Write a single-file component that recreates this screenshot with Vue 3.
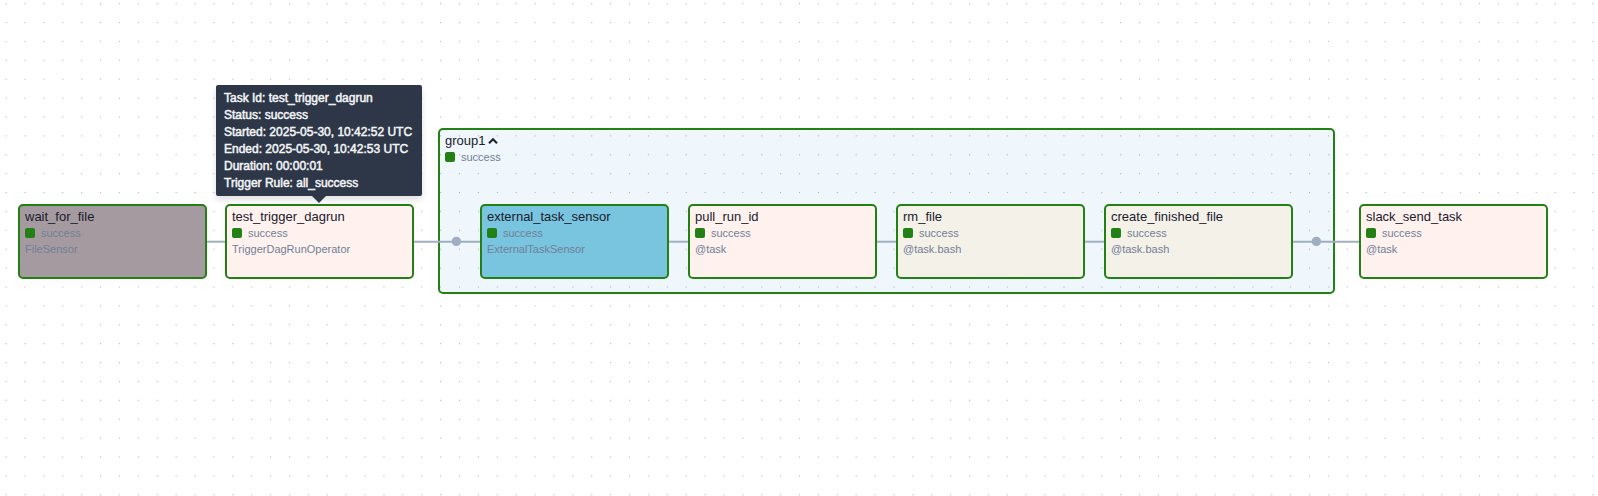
<script setup>
import { ref } from 'vue'

const groupOpen = ref(true)

const group = { label: 'group1', state: 'success', x: 438, y: 128, w: 897, h: 166 }

const tasks = [
  { id: 'wait_for_file', state: 'success', operator: 'FileSensor', x: 18, tone: 'file' },
  { id: 'test_trigger_dagrun', state: 'success', operator: 'TriggerDagRunOperator', x: 225, tone: 'python' },
  { id: 'external_task_sensor', state: 'success', operator: 'ExternalTaskSensor', x: 480, tone: 'external' },
  { id: 'pull_run_id', state: 'success', operator: '@task', x: 688, tone: 'python' },
  { id: 'rm_file', state: 'success', operator: '@task.bash', x: 896, tone: 'bash' },
  { id: 'create_finished_file', state: 'success', operator: '@task.bash', x: 1104, tone: 'bash' },
  { id: 'slack_send_task', state: 'success', operator: '@task', x: 1359, tone: 'python' },
]

const edges = [
  [206, 226],
  [413, 481],
  [668, 689],
  [876, 897],
  [1084, 1105],
  [1292, 1360],
]

const joins = [456, 1316]

const details = [
  ['Task Id', 'test_trigger_dagrun'],
  ['Status', 'success'],
  ['Started', '2025-05-30, 10:42:52 UTC'],
  ['Ended', '2025-05-30, 10:42:53 UTC'],
  ['Duration', '00:00:01'],
  ['Trigger Rule', 'all_success'],
]

const at = (x, y) => ({ left: `${x}px`, top: `${y}px` })
</script>

<template>
  <main class="canvas">
    <svg class="layer" aria-hidden="true">
      <defs>
        <pattern id="dots" x="5.6" y="3.1" width="18.89" height="18.89" patternUnits="userSpaceOnUse">
          <circle cx="0.6" cy="0.6" r="0.6" fill="#a8a8ae" />
        </pattern>
      </defs>
      <rect width="100%" height="100%" fill="url(#dots)" />
    </svg>

    <section
      class="group"
      :style="{ ...at(group.x, group.y), width: `${group.w}px`, height: `${group.h}px` }"
    >
      <button class="toggle" type="button" :aria-expanded="groupOpen" @click="groupOpen = !groupOpen">
        {{ group.label }}
        <svg class="chevron" viewBox="0 0 10 8" aria-hidden="true">
          <path d="M1 6.2 5 2.2 9 6.2" />
        </svg>
      </button>
      <p class="state"><span class="swatch"></span>{{ group.state }}</p>
    </section>

    <svg class="layer" aria-hidden="true">
      <line v-for="[from, to] in edges" :key="from" class="edge" :x1="from" :x2="to" y1="241.7" y2="241.7" />
      <circle v-for="x in joins" :key="x" class="join" :cx="x + 0.4" cy="241.4" r="4.7" />
    </svg>

    <article v-for="task in tasks" :key="task.id" class="task" :class="task.tone" :style="at(task.x, 204)">
      <h2 class="name">{{ task.id }}</h2>
      <p class="state"><span class="swatch"></span>{{ task.state }}</p>
      <p class="operator">{{ task.operator }}</p>
    </article>

    <div class="tooltip" role="tooltip" :style="at(216, 85)">
      <p v-for="[label, value] in details" :key="label">{{ label }}: {{ value }}</p>
    </div>
  </main>
</template>

<style>
body {
  margin: 0;
  background: #fff;
}
</style>

<style scoped>
.canvas {
  position: relative;
  min-height: 100vh;
  overflow: hidden;
  font-family: "Liberation Sans", Arial, sans-serif;
  color: #1a202c;
}

.layer {
  position: absolute;
  inset: 0;
  width: 100%;
  height: 100%;
}

.edge {
  stroke: #a0aec0;
  stroke-width: 2;
}

.join {
  fill: #a0aec0;
}

.group,
.task {
  position: absolute;
  box-sizing: border-box;
  padding: 3px 5px 0;
  border: 2px solid #228015;
  border-radius: 5px;
}

.group {
  background: rgba(49, 140, 220, 0.08);
}

.task {
  width: 189px;
  height: 75px;
}

.file { background: #a59aa0; }
.python { background: #fff2ee; }
.external { background: #79c4df; }
.bash { background: #f4f1e9; }

.name,
.toggle {
  margin: 0;
  font-size: 13px;
  font-weight: 400;
  line-height: 16px;
}

.toggle {
  display: flex;
  align-items: center;
  gap: 3px;
  padding: 0;
  border: 0;
  background: none;
  color: inherit;
  font-family: inherit;
  cursor: pointer;
}

.chevron {
  width: 10px;
  height: 8px;
  fill: none;
  stroke: #1a202c;
  stroke-width: 2;
}

.state,
.operator {
  margin: 0;
  color: #718096;
  font-size: 11px;
  line-height: 16px;
}

.state {
  display: flex;
  align-items: center;
  gap: 6px;
}

.swatch {
  width: 10px;
  height: 10px;
  border-radius: 2px;
  background: #228015;
}

.tooltip {
  position: absolute;
  padding: 5px 10px 4px 8px;
  border-radius: 2px;
  background: #2d3748;
  color: #f3f4f6;
  font-size: 12px;
  line-height: 17px;
  white-space: nowrap;
  -webkit-text-stroke: 0.5px #f3f4f6;
  box-shadow: 0 4px 6px rgba(0, 0, 0, 0.12);
}

.tooltip p {
  margin: 0;
}

.tooltip::after {
  content: "";
  position: absolute;
  top: 100%;
  left: 50%;
  margin-left: -7px;
  border: 7px solid transparent;
  border-top-color: #2d3748;
  border-bottom: 0;
}
</style>
